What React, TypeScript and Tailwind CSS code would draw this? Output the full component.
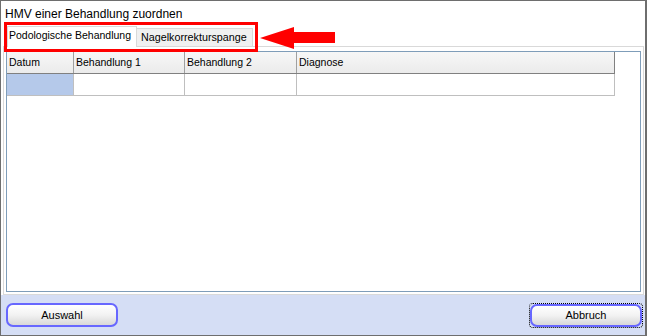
export default function App() {
  const font = { fontFamily: '"Liberation Sans", Arial, sans-serif' };
  return (
    <div
      className="relative w-[647px] h-[336px] bg-white border-l border-t border-r-2 border-b border-[#6e6e6e] flex flex-col text-[10.5px] text-black overflow-hidden"
      style={font}
    >
      {/* title */}
      <div className="h-[25px] pl-[4px] flex items-center text-[12px] leading-none pt-[1px]">
        HMV einer Behandlung zuordnen
      </div>

      {/* tabs */}
      <div className="h-[20px] pl-[6px] flex items-end">
        <div className="h-[21px] w-[130px] pl-[1px] bg-white border border-b-0 border-[#d9d9d9] flex items-center relative z-10 -mb-[1px] pb-[2px]">
          Podologische Behandlung
        </div>
        <div className="h-[18px] w-[116px] pl-[4px] bg-[#f0f0f0] border border-l-0 border-b-0 border-[#d9d9d9] flex items-center text-[10.75px]">
          Nagelkorrekturspange
        </div>
      </div>

      {/* tab panel */}
      <div className="ml-[2px] w-[641px] h-[249px] border border-[#d9d9d9] pt-[4px] pl-[2px] pr-[2px] pb-[2px]">
        <div className="w-[635px] h-[241px] border border-[#7f9db9] bg-white">
          <div className="flex h-[22px] border-b border-r border-[#808080] w-[608px] bg-gradient-to-b from-[#f7f7f7] to-[#ebebeb]">
            <div className="w-[67px] border-r border-[#a0a0a0] pl-[2px] flex items-center">Datum</div>
            <div className="w-[111px] border-r border-[#a0a0a0] pl-[2px] flex items-center">Behandlung 1</div>
            <div className="w-[112px] border-r border-[#a0a0a0] pl-[2px] flex items-center">Behandlung 2</div>
            <div className="flex-1 pl-[2px] flex items-center">Diagnose</div>
          </div>
          <div className="flex h-[22px] border-b border-r border-[#bfbfbf] w-[608px]">
            <div className="w-[67px] bg-[#b5c9ea] border-r border-[#bfbfbf]" />
            <div className="w-[111px] border-r border-[#bfbfbf]" />
            <div className="w-[112px] border-r border-[#bfbfbf]" />
            <div className="flex-1" />
          </div>
        </div>
      </div>

      {/* footer */}
      <div className="flex-1 bg-[#d5def5] flex items-center justify-between pl-[5px] pr-[3px]">
        <button className="w-[112px] h-[24px] rounded-[7px] border-2 border-[#6767ff] bg-gradient-to-b from-white via-[#f2f2f2] to-[#d8d8d8] text-[11px] flex items-center justify-center">
          Auswahl
        </button>
        <div className="outline outline-1 outline-dotted outline-black rounded-[3px]">
          <button className="w-[112px] h-[23px] rounded-[7px] border-2 border-[#6767ff] bg-gradient-to-b from-white via-[#f2f2f2] to-[#d8d8d8] text-[11px] flex items-center justify-center">
            Abbruch
          </button>
        </div>
      </div>

      {/* red highlight box */}
      <div className="absolute left-[3px] top-[21px] w-[254px] h-[30px] border-[3px] border-[#ff0000]" />
      {/* arrow */}
      <svg className="absolute left-[258px] top-[24px]" width="78" height="26" viewBox="0 0 78 26">
        <polygon points="1,13 35,2 35,7 76,7 76,18 35,18 35,24" fill="#ff0000" />
      </svg>
    </div>
  );
}
